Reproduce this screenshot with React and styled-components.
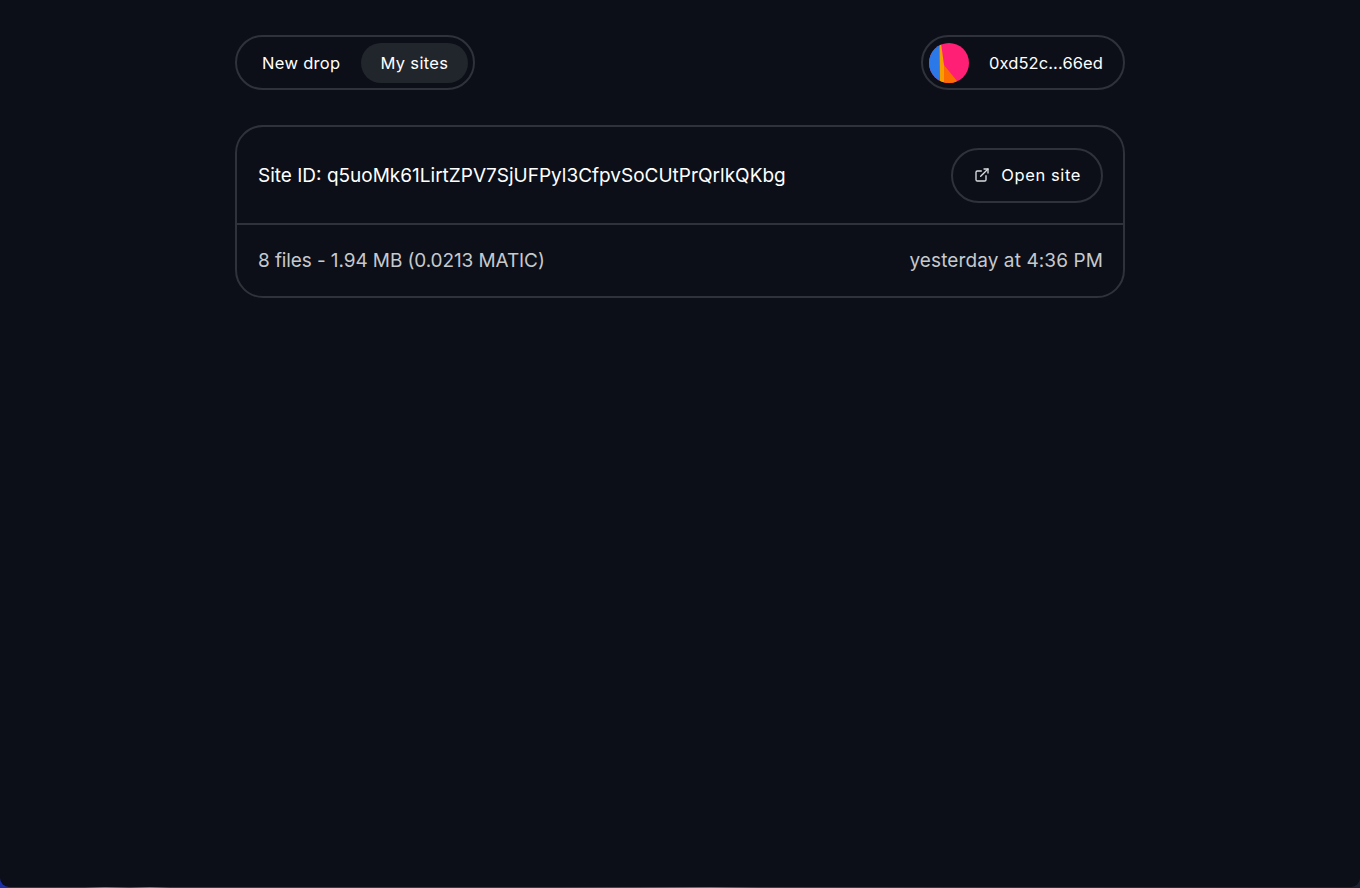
import React from 'react';
import styled, { createGlobalStyle } from 'styled-components';
import { LuExternalLink } from 'react-icons/lu';

const GlobalStyle = createGlobalStyle`
  html, body {
    margin: 0;
    padding: 0;
    height: 100%;
    overflow: hidden;
  }
  html {
    /* wallpaper peeking out under the window's rounded bottom edge */
    background: linear-gradient(
      90deg,
      #1b2fa8 0,
      #1f3a94 85px,
      #5a7cba 105px,
      #24408f 130px,
      #5a7cba 150px,
      #1f3a94 170px,
      #1e3a8a 560px,
      #3b4a7a 640px,
      #4d6fb8 710px,
      #24408f 760px,
      #25325f 1000px,
      #1d2233 1360px
    );
  }
  body {
    font-family: 'Inter', 'Noto Sans', sans-serif;
    color: #fff;
  }
`;

const Shell = styled.div`
  height: calc(100vh - 1px);
  background: #0c0f17;
  border-radius: 0 0 9px 9px;
`;

const Page = styled.main`
  width: 890px;
  margin: 0 auto;
  padding-top: 35px;
`;

const TopBar = styled.header`
  display: flex;
  justify-content: space-between;
  align-items: center;
  margin-bottom: 35px;
`;

const Pill = styled.div`
  display: flex;
  align-items: center;
  height: 55px;
  box-sizing: border-box;
  border: 2px solid #2f323a;
  border-radius: 28px;
`;

const Tabs = styled(Pill)`
  padding: 0 5px;
`;

const Tab = styled.button`
  height: 40px;
  padding: 0 20px;
  border: 0;
  border-radius: 20px;
  font: 400 16.5px 'Inter', sans-serif;
  letter-spacing: 0.32px;
  color: #fff;
  background: ${(p) => (p.$active ? '#21252c' : 'transparent')};
`;

const Wallet = styled(Pill)`
  padding: 0 20px 0 6px;
  font-size: 16.5px;
  letter-spacing: 0.1px;
`;

const Avatar = styled.svg`
  width: 40px;
  height: 40px;
  margin-right: 20px;
  border-radius: 50%;
`;

const Card = styled.section`
  border: 2px solid #2f323a;
  border-radius: 28px;
`;

const CardRow = styled.div`
  display: flex;
  justify-content: space-between;
  align-items: center;
  padding: 0 20px 0 21px;
  height: ${(p) => p.$height}px;
  font-size: 19px;
  color: ${(p) => (p.$muted ? '#c6c9ce' : '#fff')};
  border-top: ${(p) => (p.$divided ? '2px solid #2f323a' : '0')};
`;

const MetaText = styled.span`
  letter-spacing: ${(p) => p.$spacing}px;
`;

const OpenButton = styled.a`
  display: flex;
  align-items: center;
  gap: 11px;
  height: 55px;
  box-sizing: border-box;
  padding: 0 20px 0 21px;
  border: 2px solid #2f323a;
  border-radius: 28px;
  font-size: 16.5px;
  letter-spacing: 0.6px;
  color: #fff;
`;

export default function App() {
  return (
    <>
      <GlobalStyle />
      <Shell>
        <Page>
          <TopBar>
            <Tabs>
              <Tab>New drop</Tab>
              <Tab $active>My sites</Tab>
            </Tabs>
            <Wallet>
              <Avatar viewBox="0 0 40 40">
                <rect width="40" height="40" fill="#ff1f75" />
                <path d="M0 0H10.5L11 40H0Z" fill="#2b79e8" />
                <path d="M10.5 0H12L15 22V40H11Z" fill="#f5a000" />
                <path d="M15 22L28 38L26 40H15Z" fill="#fb6d00" />
              </Avatar>
              0xd52c...66ed
            </Wallet>
          </TopBar>
          <Card>
            <CardRow $height={96}>
              <span>Site ID: q5uoMk61LirtZPV7SjUFPyl3CfpvSoCUtPrQrlkQKbg</span>
              <OpenButton>
                <LuExternalLink size={16} color="#dcdee1" />
                Open site
              </OpenButton>
            </CardRow>
            <CardRow $height={71} $divided $muted>
              <MetaText $spacing={-0.1}>8 files - 1.94 MB (0.0213 MATIC)</MetaText>
              <MetaText $spacing={0.1}>yesterday at 4:36 PM</MetaText>
            </CardRow>
          </Card>
        </Page>
      </Shell>
    </>
  );
}
